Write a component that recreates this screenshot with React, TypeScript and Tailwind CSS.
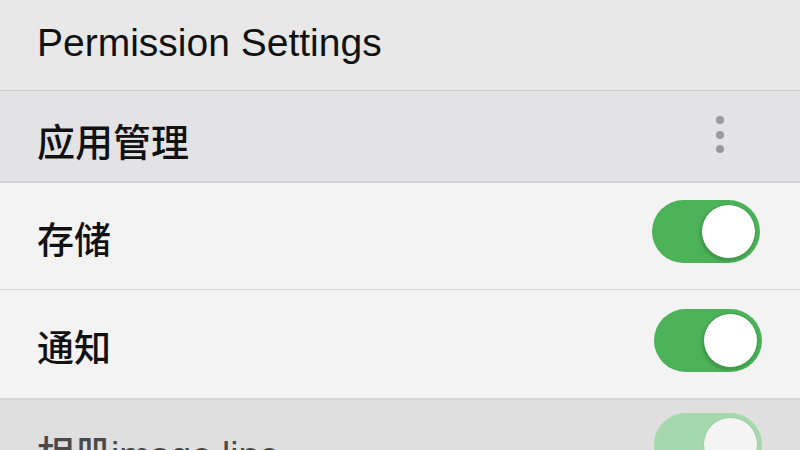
const latin = { fontFamily: '"Liberation Sans", Arial, sans-serif' };
const cjk = { fontFamily: '"Liberation Sans", "Noto Sans CJK SC", sans-serif' };

const Toggle = ({ faded = false }: { faded?: boolean }) => {
    return (
        <div
            className={
                "w-[108px] h-[63px] rounded-full p-[4px] flex justify-end " +
                (faded ? "bg-[#a6d8ad]" : "bg-[#4cb258]")
            }
        >
            <div
                className={
                    "w-[55px] h-[55px] rounded-full border " +
                    (faded
                        ? "bg-[#f4f4f4] border-[#98cf9f]"
                        : "bg-white border-[#3f9a4a] shadow-[-1px_2px_3px_rgba(0,0,0,0.18)]")
                }
            ></div>
        </div>
    );
};

const App = () => {
    return (
        <div className="w-[800px] h-[450px] overflow-hidden flex flex-col bg-[#f3f3f3] text-[#111]">
            <div className="h-[91px] shrink-0 bg-[#e8e8e8] border-b border-[#cdcdcd] pl-[37px] pt-[23px]">
                <h1 className="text-[39px] leading-none" style={latin}>
                    Permission Settings
                </h1>
            </div>

            <div className="h-[92px] shrink-0 bg-[#e3e3e5] border-b-2 border-[#d2d2d4] pl-[37px] pr-[76px] flex justify-between">
                <span className="text-[38px] font-medium leading-none mt-[33px]" style={cjk}>
                    应用管理
                </span>
                <div className="flex flex-col gap-[6.5px] mt-[25px]">
                    <span className="w-[8px] h-[8px] rounded-full bg-[#9a9a9c]"></span>
                    <span className="w-[8px] h-[8px] rounded-full bg-[#9a9a9c]"></span>
                    <span className="w-[8px] h-[8px] rounded-full bg-[#9a9a9c]"></span>
                </div>
            </div>

            <div className="h-[107px] shrink-0 border-b border-[#d3d3d3] pl-[37px] pr-[40px] flex justify-between">
                <span className="text-[37px] font-medium leading-none mt-[40px]" style={cjk}>
                    存储
                </span>
                <div className="mt-[17px]">
                    <Toggle />
                </div>
            </div>

            <div className="h-[110px] shrink-0 border-b-2 border-[#d6d6d6] pl-[37px] pr-[38px] flex justify-between">
                <span className="text-[37px] font-medium leading-none mt-[41px]" style={cjk}>
                    通知
                </span>
                <div className="mt-[19px]">
                    <Toggle />
                </div>
            </div>

            <div className="flex-1 bg-[#dfdfdf] pl-[37px] pr-[38px] flex justify-between">
                <span className="text-[37px] font-medium leading-none mt-[37px] text-[#4a4a4a]" style={cjk}>
                    相册image line
                </span>
                <div className="mt-[13px]">
                    <Toggle faded />
                </div>
            </div>
        </div>
    );
};

export default App;
